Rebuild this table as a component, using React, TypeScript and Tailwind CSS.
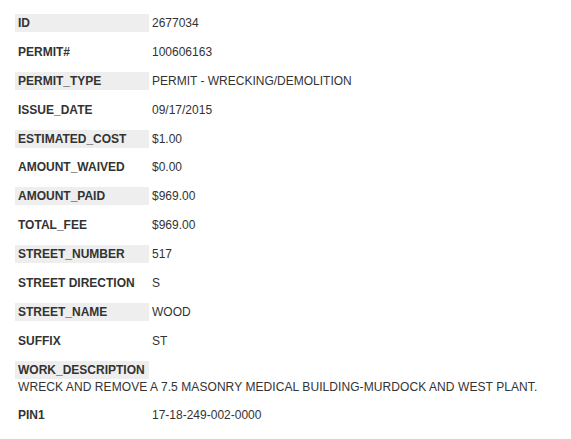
import React from "react";

const rows: [string, string, boolean][] = [
  ["ID", "2677034", true],
  ["PERMIT#", "100606163", false],
  ["PERMIT_TYPE", "PERMIT - WRECKING/DEMOLITION", true],
  ["ISSUE_DATE", "09/17/2015", false],
  ["ESTIMATED_COST", "$1.00", true],
  ["AMOUNT_WAIVED", "$0.00", false],
  ["AMOUNT_PAID", "$969.00", true],
  ["TOTAL_FEE", "$969.00", false],
  ["STREET_NUMBER", "517", true],
  ["STREET DIRECTION", "S", false],
  ["STREET_NAME", "WOOD", true],
  ["SUFFIX", "ST", false],
];

export default function App() {
  return (
    <div
      className="w-[571px] h-[439px] bg-white text-[#333333] text-[12px] pl-[15px] pt-[14px]"
      style={{ fontFamily: '"Liberation Sans", Arial, sans-serif' }}
    >
      {rows.map(([k, v, shaded]) => (
        <div key={k} className="flex h-[18px] mb-[10.9px] items-center leading-[18px]">
          <div className={`w-[134px] h-[18px] pl-[3px] font-bold ${shaded ? "bg-[#eeeeee]" : ""}`}>{k}</div>
          <div className="pl-[3px]">{v}</div>
        </div>
      ))}
      <div className="flex h-[18px] leading-[18px]">
        <div className="w-[134px] h-[18px] pl-[3px] font-bold bg-[#eeeeee]">WORK_DESCRIPTION</div>
      </div>
      <div className="pl-[3px] leading-[17px] mb-[10px] tracking-[0.08px]">
        WRECK AND REMOVE A 7.5 MASONRY MEDICAL BUILDING-MURDOCK AND WEST PLANT.
      </div>
      <div className="flex h-[18px] leading-[18px]">
        <div className="w-[134px] h-[18px] pl-[3px] font-bold">PIN1</div>
        <div className="pl-[3px]">17-18-249-002-0000</div>
      </div>
    </div>
  );
}
